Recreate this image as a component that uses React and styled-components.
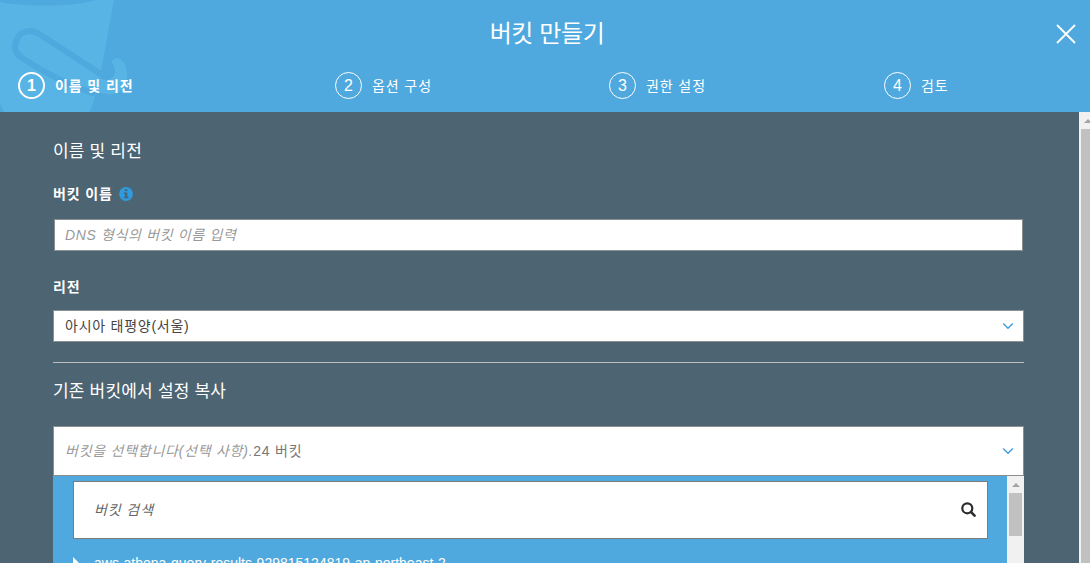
import React from 'react';
import styled, { createGlobalStyle, css } from 'styled-components';

const GlobalStyle = createGlobalStyle`
  * {
    box-sizing: border-box;
  }

  body {
    margin: 0;
    overflow: hidden;
    font-family: 'Liberation Sans', 'Noto Sans CJK KR', sans-serif;
    font-size: 14px;
    color: #fff;
  }
`;

const Wizard = styled.div`
  width: 100%;
  height: 100vh;
  display: flex;
  flex-direction: column;
  overflow: hidden;
  background-color: #4d6472;
`;

const Header = styled.header`
  position: relative;
  flex: 0 0 112px;
  background-color: #4fa9de;
`;

const BucketArt = styled.svg`
  position: absolute;
  top: 0;
  left: 0;
`;

const TitleBar = styled.div`
  position: relative;
  height: 68px;
  display: grid;
  grid-template-columns: 40px 1fr 40px;
  padding: 0 4px 0 0;
`;

const Title = styled.h1`
  grid-column: 2;
  margin: 0;
  padding-left: 8px;
  font-size: 24px;
  font-weight: 400;
  line-height: 68px;
  letter-spacing: -0.4px;
  text-align: center;
`;

const CloseButton = styled.button`
  align-self: center;
  justify-self: center;
  display: flex;
  padding: 0;
  border: 0;
  background: none;
  color: #fff;
`;

const Steps = styled.ol`
  position: relative;
  display: grid;
  grid-template-columns: 317px 274px 275px 1fr;
  margin: 0;
  padding: 4px 0 0 18px;
  list-style: none;
`;

const Step = styled.li`
  display: flex;
  align-items: center;
  height: 27px;
  font-weight: ${props => (props.$active ? 700 : 400)};
`;

const StepNumber = styled.span`
  width: 27px;
  height: 27px;
  margin-right: 10px;
  border: ${props => (props.$active ? 2 : 1)}px solid #fff;
  border-radius: 50%;
  font-size: 16px;
  line-height: ${props => (props.$active ? 24 : 26)}px;
  text-align: center;
`;

const StepLabel = styled.span`
  padding-top: 2px;
  letter-spacing: 0.9px;
  line-height: 27px;
`;

const Body = styled.div`
  flex: 1;
  min-height: 0;
  display: flex;
  justify-content: space-between;
`;

const Form = styled.main`
  width: 971px;
  margin-left: 53px;
  padding-top: 30px;
`;

const SectionTitle = styled.h2`
  margin: 0;
  height: 20px;
  font-size: 17px;
  font-weight: 400;
  line-height: 20px;
  letter-spacing: 0.2px;
`;

const Label = styled.label`
  display: flex;
  align-items: center;
  height: 20px;
  font-weight: 700;
  letter-spacing: 0.85px;

  svg {
    margin-left: 6px;
  }
`;

const NameLabel = styled(Label)`
  margin-top: 21px;

  svg {
    margin-top: 1px;
  }
`;

const RegionLabel = styled(Label)`
  margin-top: 25px;
`;

const field = css`
  border: 1px solid #8a8f92;
  background-color: #fff;
`;

const NameInput = styled.input`
  ${field};
  display: block;
  width: 969px;
  height: 32px;
  margin: 16px 0 0 1px;
  padding: 0 10px;
  font: italic 14px 'Liberation Sans', 'Noto Sans CJK KR', sans-serif;
  letter-spacing: 0.65px;

  &::placeholder {
    color: #999;
    opacity: 1;
  }
`;

const Select = styled.div`
  ${field};
  display: flex;
  align-items: center;
  justify-content: space-between;
  height: ${props => props.$height}px;
  padding: 0 9px 0 11px;
  color: #444;
  letter-spacing: 0.75px;

  > span {
    margin-top: -2px;
  }
`;

const RegionSelect = styled(Select)`
  margin-top: 14px;
`;

const BucketSelect = styled(Select)`
  margin-top: 24px;
  color: #777;

  em {
    color: #999;
  }
`;

const Divider = styled.hr`
  height: 1px;
  margin: 20px 0 19px;
  border: 0;
  background-color: #bcbcbc;
`;

const Dropdown = styled.div`
  display: flex;
  height: 120px;
  background-color: #4fa9de;
`;

const DropdownContent = styled.div`
  flex: 1;
  padding: 5px 19px 0 20px;
`;

const SearchBox = styled.div`
  display: flex;
  align-items: center;
  justify-content: space-between;
  height: 58px;
  padding: 0 11px 2px 20px;
  border: 1px solid #7c7c7c;
  background-color: #fff;
  color: #666;
  font-style: italic;
  letter-spacing: 0.9px;
`;

const BucketRow = styled.div`
  display: flex;
  align-items: center;
  height: 20px;
  margin-top: 14px;
`;

const RowArrow = styled.span`
  width: 0;
  height: 0;
  margin-right: 15px;
  border: 6px solid transparent;
  border-right: 0;
  border-left-color: #fff;
`;

const Track = styled.div`
  flex: 0 0 17px;
  display: flex;
  flex-direction: column;
  align-items: center;
  background-color: #f1f1f1;
`;

const PageTrack = styled(Track)`
  margin-right: -6px;
`;

const TrackArrow = styled.span`
  width: 0;
  height: 0;
  margin: 7px 0 6px;
  border: 4px solid transparent;
  border-top: 0;
  border-bottom-color: #a3a3a3;
`;

const Thumb = styled.div`
  width: 13px;
  height: ${props => props.$height};
  background-color: #c1c1c1;
`;

const steps = ['이름 및 리전', '옵션 구성', '권한 설정', '검토'];

function Chevron() {
  return (
    <svg width="12" height="8" viewBox="0 0 12 8" fill="none">
      <path d="M1.2 1.5 6 6.2l4.8-4.7" stroke="#3c9fdb" strokeWidth="1.4" />
    </svg>
  );
}

function InfoIcon() {
  return (
    <svg width="14" height="14" viewBox="0 0 14 14">
      <circle cx="7" cy="7" r="6.9" fill="#2e9bdf" />
      <path d="M5.8 2.3h2.5v2H5.8zM4.8 5.5h3.5v4.2h1.2v1.6H4.8V9.7H6V7.1H4.8z" fill="#4d6472" />
    </svg>
  );
}

function SearchIcon() {
  return (
    <svg width="15" height="15" viewBox="0 0 15 15" fill="none" stroke="#2b2b2b">
      <circle cx="6.3" cy="6.3" r="5" strokeWidth="2.2" />
      <path d="m9.9 9.9 3.7 3.8" strokeWidth="2.5" strokeLinecap="round" />
    </svg>
  );
}

function Bucket() {
  return (
    <BucketArt width="140" height="112" viewBox="0 0 140 112">
      <path
        d="M0 0H114L101 71L108 74C114 75 117 69 111 63C114 56 121 56 125 65C130 78 126 92 114 94C108 95 101 93 96 92L95 97L91 109L89 112H4L0 103Z"
        fill="#57b4e4"
      />
      <path d="M0 0H95C78 7 20 7 0 2Z" fill="#4fa9de" />
      <path
        d="M103 75.5L40 34.5C31 28 21 31 17 39C13 47 15 53 22 58C45 73 70 86 95 94"
        fill="none"
        stroke="#4fa9de"
        strokeWidth="6"
      />
      <path d="M101 71L111 62C117 68 117 79 107 80C101 80 98 76 94 72Z" fill="#4fa9de" />
    </BucketArt>
  );
}

function Scrollbar({ rail: Rail = Track, thumbHeight }) {
  return (
    <Rail>
      <TrackArrow />
      <Thumb $height={thumbHeight} />
    </Rail>
  );
}

function App() {
  return (
    <Wizard>
      <GlobalStyle />
      <Header>
        <Bucket />
        <TitleBar>
          <Title>버킷 만들기</Title>
          <CloseButton aria-label="닫기">
            <svg width="20" height="20" viewBox="0 0 20 20">
              <path d="M1 1 19 19M19 1 1 19" stroke="currentColor" strokeWidth="1.8" />
            </svg>
          </CloseButton>
        </TitleBar>
        <Steps>
          {steps.map((step, index) => (
            <Step key={step} $active={index === 0}>
              <StepNumber $active={index === 0}>{index + 1}</StepNumber>
              <StepLabel>{step}</StepLabel>
            </Step>
          ))}
        </Steps>
      </Header>
      <Body>
        <Form>
          <SectionTitle>이름 및 리전</SectionTitle>
          <NameLabel htmlFor="bucket-name">
            버킷 이름
            <InfoIcon />
          </NameLabel>
          <NameInput id="bucket-name" placeholder="DNS 형식의 버킷 이름 입력" />
          <RegionLabel>리전</RegionLabel>
          <RegionSelect $height={32}>
            <span>아시아 태평양(서울)</span>
            <Chevron />
          </RegionSelect>
          <Divider />
          <SectionTitle>기존 버킷에서 설정 복사</SectionTitle>
          <BucketSelect $height={50}>
            <span>
              <em>버킷을 선택합니다(선택 사항).</em>
              24 버킷
            </span>
            <Chevron />
          </BucketSelect>
          <Dropdown>
            <DropdownContent>
              <SearchBox>
                <span>버킷 검색</span>
                <SearchIcon />
              </SearchBox>
              <BucketRow>
                <RowArrow />
                aws-athena-query-results-929815124819-ap-northeast-2
              </BucketRow>
            </DropdownContent>
            <Scrollbar thumbHeight="43px" />
          </Dropdown>
        </Form>
        <Scrollbar rail={PageTrack} thumbHeight="100%" />
      </Body>
    </Wizard>
  );
}

export default App;
